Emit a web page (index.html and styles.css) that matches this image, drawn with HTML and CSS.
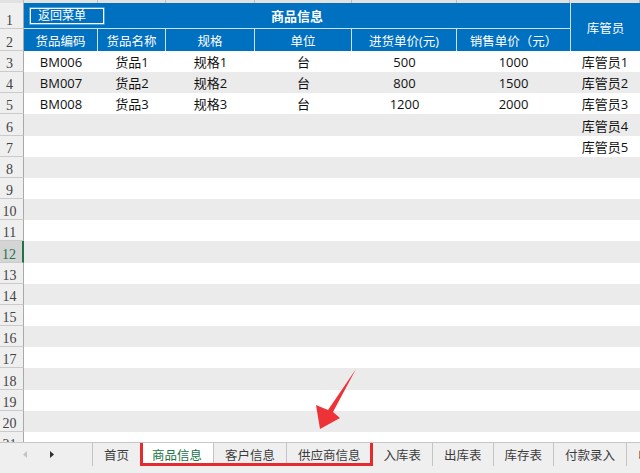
FILE: index.html
```html
<!DOCTYPE html>
<html lang="zh-CN">
<head>
<meta charset="utf-8">
<title>商品信息</title>
<link rel="stylesheet" href="styles.css">
</head>
<body>
<div class="app">
  <div class="sheet">
    <div class="colhead"><span></span><span></span><span></span><span></span><span></span><span></span><span></span><span></span></div>
    <div class="head">
      <div class="rn r1">1</div>
      <div class="title">
        <span class="btn">返回菜单</span>
        <span class="title-text">商品信息</span>
      </div>
      <div class="g-head">库管员</div>
      <div class="rn r2">2</div>
      <div class="th">货品编码</div>
      <div class="th">货品名称</div>
      <div class="th">规格</div>
      <div class="th">单位</div>
      <div class="th">进货单价(元)</div>
      <div class="th last">销售单价（元）</div>
    </div>
    <div class="row"><div class="rn">3</div><div class="c">BM006</div><div class="c">货品1</div><div class="c">规格1</div><div class="c">台</div><div class="c">500</div><div class="c">1000</div><div class="c">库管员1</div></div>
    <div class="row"><div class="rn">4</div><div class="c">BM007</div><div class="c">货品2</div><div class="c">规格2</div><div class="c">台</div><div class="c">800</div><div class="c">1500</div><div class="c">库管员2</div></div>
    <div class="row"><div class="rn">5</div><div class="c">BM008</div><div class="c">货品3</div><div class="c">规格3</div><div class="c">台</div><div class="c">1200</div><div class="c">2000</div><div class="c">库管员3</div></div>
    <div class="row"><div class="rn">6</div><div class="c span"></div><div class="c">库管员4</div></div>
    <div class="row"><div class="rn">7</div><div class="c span"></div><div class="c">库管员5</div></div>
    <div class="row"><div class="rn">8</div></div>
    <div class="row"><div class="rn">9</div></div>
    <div class="row"><div class="rn">10</div></div>
    <div class="row"><div class="rn">11</div></div>
    <div class="row sel"><div class="rn">12</div></div>
    <div class="row"><div class="rn">13</div></div>
    <div class="row"><div class="rn">14</div></div>
    <div class="row"><div class="rn">15</div></div>
    <div class="row"><div class="rn">16</div></div>
    <div class="row"><div class="rn">17</div></div>
    <div class="row"><div class="rn">18</div></div>
    <div class="row"><div class="rn">19</div></div>
    <div class="row"><div class="rn">20</div></div>
    <div class="row"><div class="rn">21</div></div>
  </div>
  <div class="tabbar">
    <div class="nav">
      <svg class="navarrow" width="4" height="7" viewBox="0 0 4 7"><polygon points="4,0 0,3.5 4,7" fill="#c4c4c4"/></svg>
      <svg class="navarrow" width="4" height="7" viewBox="0 0 4 7"><polygon points="0,0 4,3.5 0,7" fill="#2f2f2f"/></svg>
    </div>
    <div class="tab">首页</div>
    <div class="group">
      <div class="tab active">商品信息</div>
      <div class="tab">客户信息</div>
      <div class="tab">供应商信息</div>
    </div>
    <div class="tab">入库表</div>
    <div class="tab">出库表</div>
    <div class="tab">库存表</div>
    <div class="tab">付款录入</div>
    <div class="tab">收款录入</div>
  </div>
</div>
<svg class="annot" width="640" height="473" viewBox="0 0 640 473">
  <polygon points="356,369 333,412 340,418 320,429 316,405 328,410" fill="#ee3338"/>
</svg>
</body>
</html>
```
FILE: styles.css
```css
* {
  box-sizing: border-box;
  margin: 0;
  padding: 0;
}

:root {
  --cols: 24px 74px 68px 89px 97px 105px 113px 70px;
  --blue: #0070c0;
  --hline: #cfe2f3;
}

html,
body {
  width: 640px;
  height: 473px;
  overflow: hidden;
}

body {
  position: relative;
  background: #fff;
  color: #111;
  font-family: "Open Sans", "Noto Sans CJK SC", sans-serif;
  font-size: 13px;
}

.app {
  display: flex;
  flex-direction: column;
  height: 473px;
}

.sheet {
  flex: none;
  height: 442px;
  overflow: hidden;
}

.colhead {
  display: grid;
  grid-template-columns: var(--cols);
  height: 3px;
  background: #e2e2e2;
}

.colhead span {
  border-right: 1px solid #bdbdbd;
}

.head {
  display: grid;
  grid-template-columns: var(--cols);
  grid-template-rows: 26px 22px;
}

.rn {
  display: flex;
  align-items: flex-end;
  justify-content: center;
  padding-right: 4px;
  background: #efefef;
  border-right: 1px solid #a9a9a9;
  border-bottom: 1px solid #cbcbcb;
  color: #444;
  font-family: "Liberation Serif", serif;
  font-size: 14px;
  line-height: 14px;
}

.r1 {
  grid-column: 1;
  grid-row: 1;
}

.r2 {
  grid-column: 1;
  grid-row: 2;
}

.title {
  grid-column: 2 / 8;
  grid-row: 1;
  display: grid;
  grid-template-columns: 1fr auto 1fr;
  align-items: center;
  background: var(--blue);
  border-bottom: 1px solid var(--hline);
}

.btn {
  justify-self: start;
  margin-left: 6px;
  width: 74px;
  height: 16px;
  padding-left: 7px;
  border: 1px solid #fff;
  box-shadow: 0 0 0 0.6px rgba(255, 255, 255, 0.5);
  color: #fff;
  font-size: 12px;
  line-height: 14px;
}

.title-text {
  color: #fff;
  font-size: 13px;
  font-weight: bold;
}

.g-head {
  grid-column: 8;
  grid-row: 1 / 3;
  display: flex;
  align-items: center;
  justify-content: center;
  background: var(--blue);
  border-left: 1px solid var(--hline);
  color: #fff;
  font-size: 12.5px;
}

.th {
  display: flex;
  align-items: center;
  justify-content: center;
  background: var(--blue);
  border-right: 1px solid var(--hline);
  color: #fff;
  font-size: 12.5px;
  white-space: nowrap;
}

.th.last {
  border-right: none;
}

.row {
  display: grid;
  grid-template-columns: var(--cols);
  height: 21.1667px;
  background: #fff;
}

.row:nth-child(even) {
  background: #ebebeb;
}

.c {
  display: flex;
  align-items: center;
  justify-content: center;
  white-space: nowrap;
}

.c.span {
  grid-column: 2 / 8;
}

.row.sel .rn {
  background: #d4d4d4;
  color: #217346;
  border-right: 2px solid #217346;
}

.tabbar {
  flex: 1;
  display: flex;
  align-items: flex-start;
  overflow: hidden;
  background: #efefef;
  border-top: 1px solid #c6c6c6;
  color: #3c3c3c;
  font-family: "Noto Sans CJK SC", sans-serif;
  font-size: 12.5px;
}

.nav {
  flex: none;
  display: flex;
  align-items: center;
  gap: 23px;
  width: 93px;
  height: 23px;
  padding-left: 23px;
  border-right: 1px solid #c4c4c4;
}

.tab {
  flex: none;
  display: flex;
  align-items: center;
  height: 23px;
  padding: 0 11px;
  border-right: 1px solid #c4c4c4;
  white-space: nowrap;
}

.tab.active {
  background: #fff;
  color: #217346;
}

.group {
  position: relative;
  display: flex;
}

.group::after {
  content: "";
  position: absolute;
  left: -1px;
  right: 0;
  top: -4px;
  bottom: 0;
  border: 3px solid #e32b30;
}

.annot {
  position: absolute;
  left: 0;
  top: 0;
  pointer-events: none;
}
```
